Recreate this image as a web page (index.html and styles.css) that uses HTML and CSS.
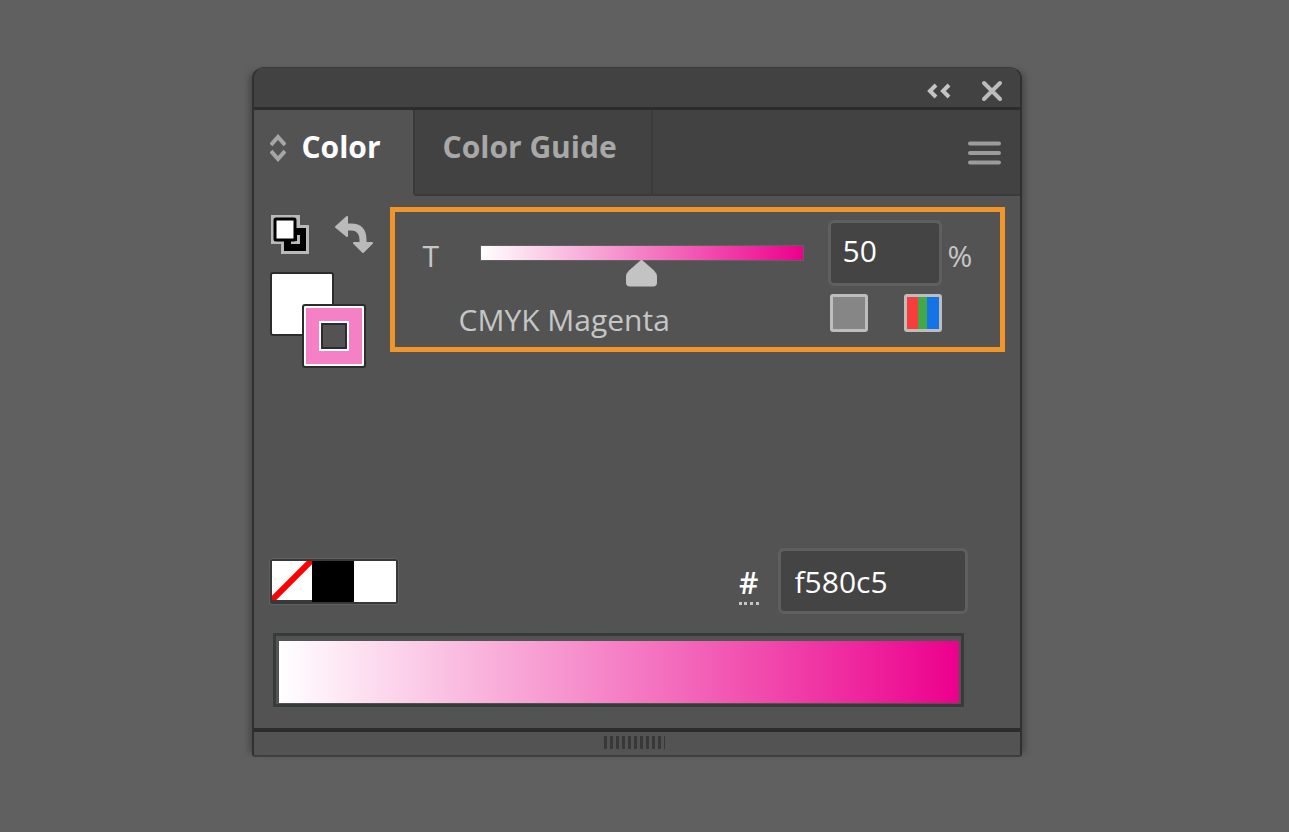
FILE: index.html
```html
<!DOCTYPE html>
<html lang="en">

<head>
    <meta charset="UTF-8">
    <meta name="viewport" content="width=device-width, initial-scale=1.0">
    <title>Color</title>
    <link rel="stylesheet" href="styles.css">
</head>

<body>
    <main class="panel">
        <header class="title-bar">
            <button class="icon-btn" aria-label="Collapse panel">
                <svg width="24" height="16" viewBox="0 0 24 16" fill="none" stroke="#c4c4c4" stroke-width="4">
                    <path d="M9 2 3 8l6 6M22 2l-6 6 6 6" />
                </svg>
            </button>
            <button class="icon-btn" aria-label="Close panel">
                <svg width="22" height="22" viewBox="0 0 22 22" fill="none" stroke="#bcbcbc" stroke-width="4" stroke-linecap="round">
                    <path d="M3 3l16 16M19 3 3 19" />
                </svg>
            </button>
        </header>

        <nav class="tabs">
            <button class="tab active">
                <svg width="16" height="28" viewBox="0 0 16 28" fill="none" stroke="#a6a6a6" stroke-width="4">
                    <path d="M1 11l7-8 7 8M1 17l7 8 7-8" />
                </svg>
                <span>Color</span>
            </button>
            <button class="tab">Color Guide</button>
            <button class="icon-btn menu-btn" aria-label="Panel menu">
                <svg width="33" height="24" viewBox="0 0 33 24" stroke="#9c9c9c" stroke-width="4" stroke-linecap="round">
                    <path d="M2 2.500h29M2 12h29M2 21.500h29" />
                </svg>
            </button>
        </nav>

        <section class="content">
            <div class="top-row">
                <div class="fill-stroke">
                    <div class="fill-tools">
                        <button class="icon-btn" aria-label="Default fill and stroke">
                            <svg width="40" height="41" viewBox="0 0 40 41">
                                <path d="M1 1h29v10h9v29H11V30H1z" fill="#b9b9b9" />
                                <path d="M14 14h22v23H14z" fill="#000" />
                                <path d="M21 21h9v9h-9z" fill="#b9b9b9" />
                                <path d="M21 21h6v6h-6z" fill="#000" />
                                <rect x="5" y="5" width="20" height="21" rx="1" fill="#fff" stroke="#000" stroke-width="3" />
                            </svg>
                        </button>
                        <button class="icon-btn" aria-label="Swap fill and stroke">
                            <svg width="39" height="40" viewBox="0 0 39 40">
                                <path d="M11 12h5q12 0 12 13v4" fill="none" stroke="#bababa" stroke-width="7" />
                                <path d="M1 12 12 2v19zM19 28h18L28 37z" fill="#bababa" stroke="#bababa" stroke-width="2" stroke-linejoin="round" />
                            </svg>
                        </button>
                    </div>
                    <div class="swatch-pair">
                        <button class="swatch fill" aria-label="Fill"></button>
                        <button class="swatch stroke" aria-label="Stroke"><span></span></button>
                    </div>
                </div>

                <div class="tint-box">
                    <div class="tint-row">
                        <label class="unit" for="tint">T</label>
                        <input type="range" id="tint" class="tint-slider" min="0" max="100" value="50">
                        <input type="text" id="tint-value" class="field" value="50">
                        <label class="unit" for="tint-value">%</label>
                    </div>
                    <div class="name-row">
                        <p class="color-name">CMYK Magenta</p>
                        <div class="modes">
                            <button class="mode spot" aria-label="Spot color"></button>
                            <button class="mode rgb" aria-label="Convert to RGB"></button>
                        </div>
                    </div>
                </div>
            </div>

            <div class="bottom-row">
                <div class="presets">
                    <button class="preset none" aria-label="None">
                        <svg width="40" height="39" viewBox="0 0 40 39" stroke="#f00" stroke-width="6">
                            <path d="M-1 40 41-2" />
                        </svg>
                    </button>
                    <button class="preset black" aria-label="Black"></button>
                    <button class="preset white" aria-label="White"></button>
                </div>
                <label class="hash" for="hex">#</label>
                <input type="text" id="hex" class="field hex-field" value="f580c5">
            </div>

            <div class="ramp"></div>
        </section>

        <footer class="grip">
            <div class="grip-lines"></div>
        </footer>
    </main>
</body>

</html>
```

FILE: styles.css
```css
* {
    margin: 0;
    padding: 0;
    box-sizing: border-box;
}

body {
    display: flex;
    justify-content: center;
    align-items: flex-start;
    min-height: 100vh;
    padding: 67px 16px 67px 0;
    background: #606060;
    color: #c6c6c6;
    font-family: 'Open Sans', 'Noto Sans', sans-serif;
    font-size: 30px;
    font-weight: 500;
    line-height: 40px;
}

button {
    border: none;
    background: none;
    color: inherit;
    font: inherit;
    cursor: pointer;
}

svg {
    display: block;
}

.panel {
    width: 100%;
    max-width: 770px;
    background: #535353;
    border: 2px solid #303030;
    border-top: 1px solid #3a3a3a;
    border-bottom-color: #3e3e3e;
    border-radius: 12px 12px 3px 3px;
    box-shadow:
        -7px 0 6px -4px rgba(0, 0, 0, 0.25),
        7px 0 6px -4px rgba(0, 0, 0, 0.25);
}

.title-bar {
    display: flex;
    justify-content: flex-end;
    align-items: center;
    gap: 30px;
    height: 42px;
    padding: 6px 17px 0 0;
    background: #424242;
    border-bottom: 3px solid #2c2c2c;
    border-radius: 11px 11px 0 0;
}

/* Tabs */
.tabs {
    display: flex;
    height: 86px;
    background: #424242;
}

.tab {
    display: flex;
    align-items: center;
    padding: 0 34px 10px 28px;
    border-right: 2px solid #3a3a3a;
    border-bottom: 2px solid #3a3a3a;
    color: #a8a8a8;
    font-weight: 700;
}

.tab.active {
    gap: 16px;
    padding: 0 32px 10px 16px;
    border-bottom-color: #535353;
    background: #535353;
    color: #fff;
}

.tab.active svg {
    margin-top: 2px;
}

.menu-btn {
    flex: 1;
    display: flex;
    justify-content: flex-end;
    align-items: center;
    padding: 2px 19px 0 0;
    border-bottom: 2px solid #3a3a3a;
}

/* Fill and stroke */
.content {
    padding: 11px 15px 21px 16px;
}

.top-row {
    display: flex;
    align-items: flex-start;
    gap: 16px;
}

.fill-stroke {
    width: 104px;
    padding-top: 7px;
}

.fill-tools {
    display: flex;
    justify-content: space-between;
    align-items: flex-end;
    height: 41px;
}

.swatch-pair {
    position: relative;
    width: 96px;
    height: 96px;
    margin-top: 17px;
}

.swatch {
    width: 64px;
    height: 64px;
    border: 2px solid #2c2c2c;
    border-radius: 3px;
    background: #fff;
}

.swatch.fill {
    display: block;
}

.swatch.stroke {
    position: absolute;
    right: 0;
    bottom: 0;
    display: flex;
    justify-content: center;
    align-items: center;
    background: #f580c5;
    box-shadow: inset 0 0 0 2px #fff;
}

.swatch.stroke span {
    width: 30px;
    height: 30px;
    border: 2px solid #fff;
    background: #535353;
    box-shadow: inset 0 0 0 2px #2c2c2c;
}

/* Tint */
.tint-box {
    flex: 1;
    min-width: 0;
    padding: 8px 20px 15px 28px;
    border: 5px solid #f0952a;
}

.tint-row {
    display: grid;
    grid-template-columns: 57px 1fr 114px 38px;
    align-items: center;
}

.unit {
    padding-top: 6px;
}

.field {
    width: 100%;
    height: 66px;
    padding: 0 12px 6px;
    border: 3px solid #5f5f5f;
    border-radius: 6px;
    background: #444;
    color: #fff;
    font: inherit;
}

.field + .unit {
    padding-left: 6px;
}

.tint-slider {
    appearance: none;
    display: block;
    min-width: 0;
    height: 16px;
    margin-right: 24px;
    border: 1px solid #616161;
    background: linear-gradient(to right, #fff, #f580c5 50%, #ec008c);
}

.tint-slider::-webkit-slider-thumb {
    appearance: none;
    width: 31px;
    height: 27px;
    margin-top: 40px;
    background: #c3c3c3;
    clip-path: path('M15.500 0 28 11Q31 14 31 17V23Q31 27 27 27H4Q0 27 0 23V17Q0 14 3 11Z');
}

.name-row {
    display: flex;
    justify-content: space-between;
    margin-top: 8px;
    padding: 0 38px 0 36px;
}

.color-name {
    height: 38px;
    padding-top: 6px;
}

.modes {
    display: flex;
    justify-content: space-between;
    width: 112px;
}

.mode {
    width: 38px;
    height: 38px;
    border: 3px solid #bdbdbd;
    border-radius: 3px;
}

.mode.spot {
    background: #868686;
}

.mode.rgb {
    background: linear-gradient(to right, #f83c3c 33%, #43a847 33% 64%, #1473e6 64%);
}

/* Presets and hex value */
.bottom-row {
    display: flex;
    align-items: center;
    margin-top: 180px;
    padding-right: 37px;
}

.presets {
    display: flex;
    margin-right: auto;
    border: 2px solid #383838;
    border-radius: 3px;
    box-shadow: 0 0 0 1px #606060;
}

.preset {
    width: 42px;
    height: 41px;
}

.preset.none {
    width: 40px;
    border-bottom: 2px solid #383838;
    background: #fff;
    overflow: hidden;
}

.preset.black {
    background: #000;
}

.preset.white {
    background: #fff;
}

.hash {
    height: 42px;
    margin: 6px 19px 0 0;
    border-bottom: 3px dotted #c6c6c6;
    color: #fff;
    font-weight: 600;
}

.hex-field {
    width: 190px;
    padding: 0 14px;
}

.ramp {
    height: 74px;
    margin: 19px 41px 0 3px;
    padding: 5px 2px 1px 3px;
    border: 3px solid #373b3a;
    background: linear-gradient(to right, #fff, #f580c5 50%, #ec008c) content-box;
}

/* Resize grip */
.grip {
    display: flex;
    justify-content: center;
    height: 27px;
    padding: 4px 4px 0 0;
    border-top: 4px solid #2c2c2c;
}

.grip-lines {
    width: 61px;
    height: 13px;
    background: repeating-linear-gradient(to right, #383838 0 3px, transparent 3px 6px);
}
```
